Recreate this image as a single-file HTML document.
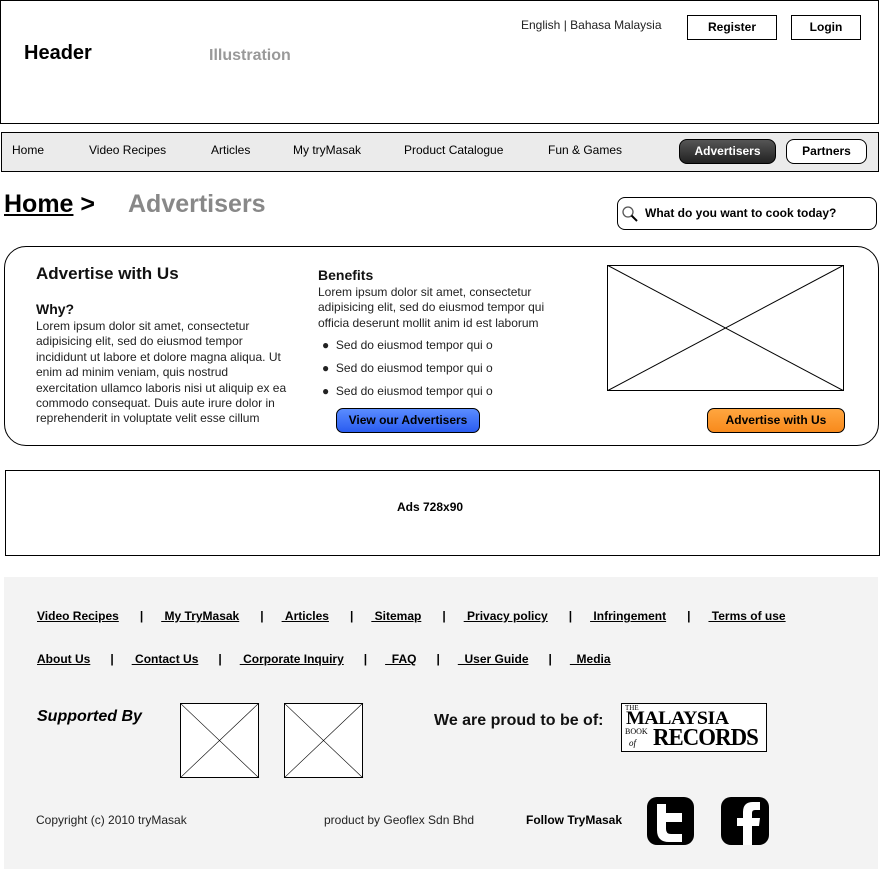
<!DOCTYPE html>
<html><head><meta charset="utf-8"><style>
*{margin:0;padding:0;box-sizing:border-box}
body{width:883px;height:884px;background:#fff;font-family:"Liberation Sans",Arial,sans-serif;color:#000;position:relative;overflow:hidden}
.a{position:absolute;white-space:nowrap}
.box{position:absolute;border:1px solid #000}
.nav{font-size:12px;top:143px}
.fl{font-size:12px;font-weight:bold;text-decoration:underline}
p.t{font-size:12px;line-height:15.4px;position:absolute}
.s1{display:inline-block;width:21px}
.s2{display:inline-block;width:18px}
</style></head><body>
<div class="box" style="left:0;top:0;width:879px;height:124px"></div>
<div class="a" style="left:24px;top:42px;font-size:20px;font-weight:bold">Header</div>
<div class="a" style="left:209px;top:47px;font-size:16px;font-weight:bold;color:#999">Illustration</div>
<div class="a" style="left:521px;top:18px;font-size:12px;color:#222">English | Bahasa Malaysia</div>
<div class="box" style="left:687px;top:15px;width:90px;height:25px;text-align:center;font-size:12px;font-weight:bold;line-height:23px">Register</div>
<div class="box" style="left:791px;top:15px;width:70px;height:25px;text-align:center;font-size:12px;font-weight:bold;line-height:23px">Login</div>

<div class="box" style="left:1px;top:132px;width:878px;height:40px;background:#ebebeb"></div>
<div class="a nav" style="left:12px">Home</div>
<div class="a nav" style="left:89px">Video Recipes</div>
<div class="a nav" style="left:211px">Articles</div>
<div class="a nav" style="left:293px">My tryMasak</div>
<div class="a nav" style="left:404px">Product Catalogue</div>
<div class="a nav" style="left:548px">Fun &amp; Games</div>
<div class="a" style="left:679px;top:139px;width:97px;height:25px;border:1px solid #000;border-radius:8px;background:linear-gradient(#555,#222);color:#fff;font-size:12px;font-weight:bold;text-align:center;line-height:23px">Advertisers</div>
<div class="a" style="left:786px;top:139px;width:81px;height:25px;border:1px solid #000;border-radius:8px;background:#fff;font-size:12px;font-weight:bold;text-align:center;line-height:23px">Partners</div>

<div class="a" style="left:4px;top:190px;font-size:25px;font-weight:bold"><span style="text-decoration:underline">Home</span> &gt;</div>
<div class="a" style="left:128px;top:190px;font-size:25px;font-weight:bold;color:#888">Advertisers</div>
<div class="a" style="left:617px;top:197px;width:260px;height:33px;border:1px solid #000;border-radius:8px"></div>
<svg class="a" style="left:621px;top:205px" width="18" height="18"><circle cx="7" cy="7" r="5" fill="none" stroke="#555" stroke-width="1.3"/><line x1="10.5" y1="10.5" x2="16" y2="16" stroke="#000" stroke-width="2"/></svg>
<div class="a" style="left:645px;top:206px;font-size:12px;font-weight:bold">What do you want to cook today?</div>

<div class="a" style="left:4px;top:246px;width:875px;height:200px;border:1px solid #000;border-radius:22px"></div>
<div class="a" style="left:36px;top:264px;font-size:17px;font-weight:bold;color:#111">Advertise with Us</div>
<div class="a" style="left:36px;top:301px;font-size:14px;font-weight:bold;color:#111">Why?</div>
<p class="t" style="left:36px;top:319px;width:280px;color:#222;white-space:nowrap">Lorem ipsum dolor sit amet, consectetur<br>adipisicing elit, sed do eiusmod tempor<br>incididunt ut labore et dolore magna aliqua. Ut<br>enim ad minim veniam, quis nostrud<br>exercitation ullamco laboris nisi ut aliquip ex ea<br>commodo consequat. Duis aute irure dolor in<br>reprehenderit in voluptate velit esse cillum</p>
<div class="a" style="left:318px;top:267px;font-size:14px;font-weight:bold;color:#111">Benefits</div>
<p class="t" style="left:318px;top:285px;width:240px;color:#222">Lorem ipsum dolor sit amet, consectetur adipisicing elit, sed do eiusmod tempor qui officia deserunt mollit anim id est laborum</p>
<div class="a" style="left:322px;top:338px;font-size:12px;color:#222">● &nbsp;Sed do eiusmod tempor qui o</div>
<div class="a" style="left:322px;top:361px;font-size:12px;color:#222">● &nbsp;Sed do eiusmod tempor qui o</div>
<div class="a" style="left:322px;top:384px;font-size:12px;color:#222">● &nbsp;Sed do eiusmod tempor qui o</div>
<div class="a" style="left:336px;top:408px;width:144px;height:25px;border:1px solid #000;border-radius:7px;background:linear-gradient(#5a8cff,#2a5cf0);font-size:12px;font-weight:bold;text-align:center;line-height:23px">View our Advertisers</div>
<svg class="a" style="left:607px;top:265px" width="237" height="126"><rect x="0.5" y="0.5" width="236" height="125" fill="#fff" stroke="#000"/><line x1="0" y1="0" x2="237" y2="126" stroke="#000"/><line x1="237" y1="0" x2="0" y2="126" stroke="#000"/></svg>
<div class="a" style="left:707px;top:408px;width:138px;height:25px;border:1px solid #000;border-radius:7px;background:linear-gradient(#ffa640,#f88a1c);font-size:12px;font-weight:bold;text-align:center;line-height:23px">Advertise with Us</div>

<div class="box" style="left:5px;top:470px;width:875px;height:86px"></div>
<div class="a" style="left:397px;top:500px;font-size:12px;font-weight:bold">Ads 728x90</div>

<div class="a" style="left:4px;top:577px;width:874px;height:292px;background:#f3f3f3"></div>
<div class="a" style="left:37px;top:609px;font-size:12px;font-weight:bold">
<span class="fl">Video Recipes</span><span class="s1"></span>|<span class="s2"></span><span class="fl">&nbsp;My TryMasak</span><span class="s1"></span>|<span class="s2"></span><span class="fl">&nbsp;Articles</span><span class="s1"></span>|<span class="s2"></span><span class="fl">&nbsp;Sitemap</span><span class="s1"></span>|<span class="s2"></span><span class="fl">&nbsp;Privacy policy</span><span class="s1"></span>|<span class="s2"></span><span class="fl">&nbsp;Infringement</span><span class="s1"></span>|<span class="s2"></span><span class="fl">&nbsp;Terms of use</span></div>
<div class="a" style="left:37px;top:652px;font-size:12px;font-weight:bold">
<span class="fl">About Us</span><span style="display:inline-block;width:20px"></span>|<span style="display:inline-block;width:18px"></span><span class="fl">&nbsp;Contact Us</span><span style="display:inline-block;width:20px"></span>|<span style="display:inline-block;width:18px"></span><span class="fl">&nbsp;Corporate Inquiry</span><span style="display:inline-block;width:20px"></span>|<span style="display:inline-block;width:18px"></span><span class="fl">&nbsp;&nbsp;FAQ</span><span style="display:inline-block;width:20px"></span>|<span style="display:inline-block;width:18px"></span><span class="fl">&nbsp;&nbsp;User Guide</span><span style="display:inline-block;width:20px"></span>|<span style="display:inline-block;width:18px"></span><span class="fl">&nbsp;&nbsp;Media</span></div>
<div class="a" style="left:37px;top:708px;font-size:16px;font-weight:bold;font-style:italic">Supported By</div>
<svg class="a" style="left:180px;top:703px" width="80" height="75"><rect x="0.5" y="0.5" width="78" height="74" fill="#fff" stroke="#000"/><line x1="0" y1="0" x2="79" y2="75" stroke="#000" stroke-width=".6"/><line x1="79" y1="0" x2="0" y2="75" stroke="#000" stroke-width=".6"/></svg>
<svg class="a" style="left:284px;top:703px" width="80" height="75"><rect x="0.5" y="0.5" width="78" height="74" fill="#fff" stroke="#000"/><line x1="0" y1="0" x2="79" y2="75" stroke="#000" stroke-width=".6"/><line x1="79" y1="0" x2="0" y2="75" stroke="#000" stroke-width=".6"/></svg>
<div class="a" style="left:434px;top:712px;font-size:16px;font-weight:bold;color:#111">We are proud to be of:</div>
<div class="a" style="left:621px;top:703px;width:146px;height:49px;border:1px solid #000;background:#fff;font-family:'Liberation Serif',serif;font-weight:bold;overflow:hidden">
<span class="a" style="left:3px;top:0;font-size:7px;font-weight:normal">THE</span>
<span class="a" style="left:4px;top:4px;font-size:19px;letter-spacing:-0.5px;transform:scaleX(1.05);transform-origin:left">MALAYSIA</span>
<span class="a" style="left:3px;top:23px;font-size:8px;font-weight:normal">BOOK</span>
<span class="a" style="left:7px;top:34px;font-size:9px;font-style:italic;font-weight:normal">of</span>
<span class="a" style="left:31px;top:21px;font-size:24px;letter-spacing:-1px;transform:scaleX(0.95);transform-origin:left">RECORDS</span></div>
<div class="a" style="left:36px;top:813px;font-size:12px;color:#222">Copyright (c) 2010 tryMasak</div>
<div class="a" style="left:324px;top:813px;font-size:12px;color:#222">product by Geoflex Sdn Bhd</div>
<div class="a" style="left:526px;top:813px;font-size:12px;font-weight:bold">Follow TryMasak</div>
<svg class="a" style="left:647px;top:797px" width="48" height="48"><rect width="47" height="48" rx="10" fill="#000"/><path d="M10 7 h9 v9 h16 v9 h-16 v7 q0 5 5 5 h11 v8 h-13 q-12 0 -12 -12 z" fill="#fff"/></svg>
<svg class="a" style="left:721px;top:797px" width="48" height="48"><rect width="48" height="48" rx="10" fill="#000"/><path d="M22 48 v-19 h-6 v-8 h6 v-6 q0 -10 10 -10 h7 v8 h-5 q-3 0 -3 3 v5 h8 l-1 8 h-7 v19 z" fill="#fff"/></svg>
</body></html>
